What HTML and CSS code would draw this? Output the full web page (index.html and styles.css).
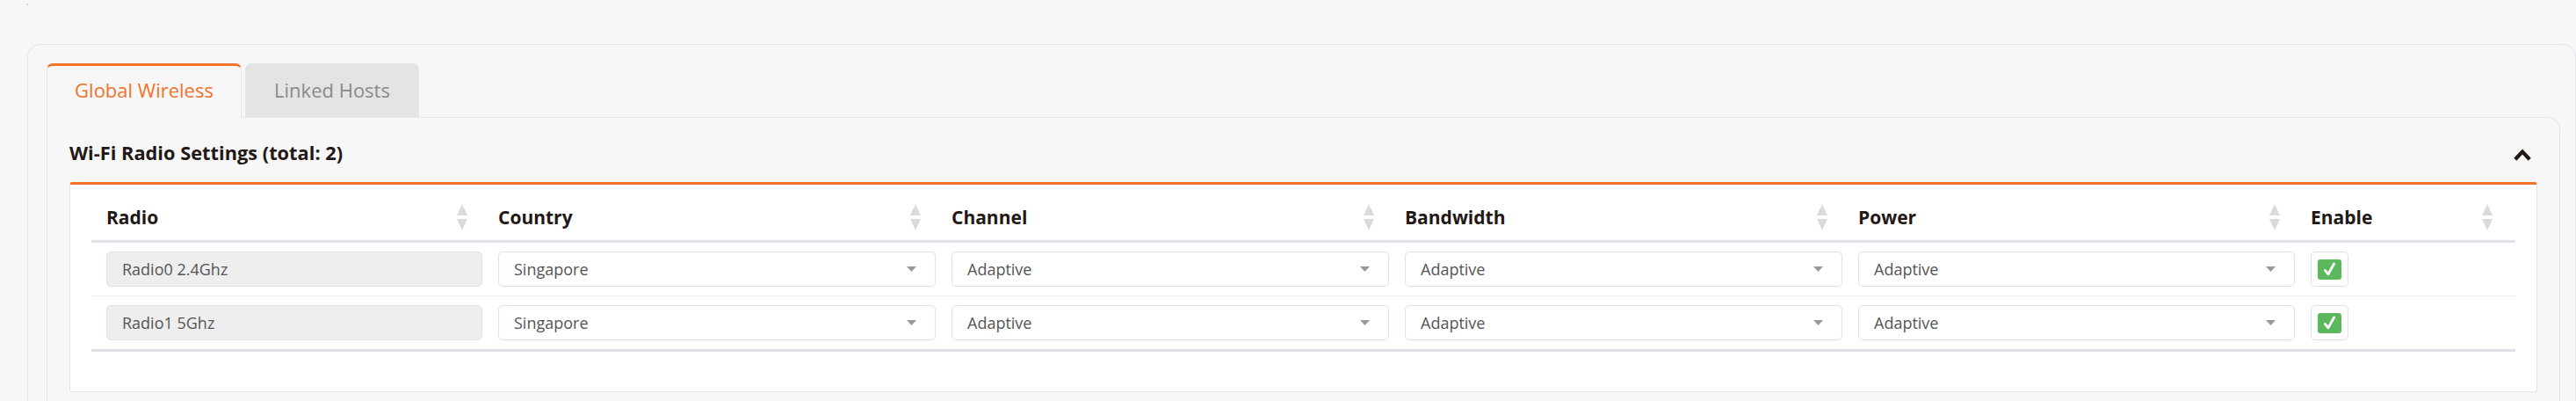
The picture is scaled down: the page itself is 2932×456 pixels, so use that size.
FILE: index.html
```html
<!DOCTYPE html>
<html>
<head>
<meta charset="utf-8">
<link rel="stylesheet" href="styles.css">
</head>
<body>
<div class="dot"></div>
<div class="outer">
  <div class="tabs">
    <div class="tab active">Global Wireless</div>
    <div class="tab">Linked Hosts</div>
  </div>
  <div class="panel">
    <div class="panel-head">
      <h3 class="title">Wi-Fi Radio Settings (total: 2)</h3>
      <svg class="chev" width="20" height="15" viewBox="0 0 20 15"><path d="M1.8 13.2 L10 4.6 L18.2 13.2" fill="none" stroke="#231815" stroke-width="4.2"/></svg>
    </div>
    <div class="card">
      <div class="row head">
        <div class="cell"><span>Radio</span><svg class="sort" width="12" height="30" viewBox="0 0 12 30"><path d="M6 0 L12 13 L0 13Z M0 17 L12 17 L6 30Z" fill="#dadada"/></svg></div>
        <div class="cell"><span>Country</span><svg class="sort" width="12" height="30" viewBox="0 0 12 30"><path d="M6 0 L12 13 L0 13Z M0 17 L12 17 L6 30Z" fill="#dadada"/></svg></div>
        <div class="cell"><span>Channel</span><svg class="sort" width="12" height="30" viewBox="0 0 12 30"><path d="M6 0 L12 13 L0 13Z M0 17 L12 17 L6 30Z" fill="#dadada"/></svg></div>
        <div class="cell"><span>Bandwidth</span><svg class="sort" width="12" height="30" viewBox="0 0 12 30"><path d="M6 0 L12 13 L0 13Z M0 17 L12 17 L6 30Z" fill="#dadada"/></svg></div>
        <div class="cell"><span>Power</span><svg class="sort" width="12" height="30" viewBox="0 0 12 30"><path d="M6 0 L12 13 L0 13Z M0 17 L12 17 L6 30Z" fill="#dadada"/></svg></div>
        <div class="cell"><span>Enable</span><svg class="sort" width="12" height="30" viewBox="0 0 12 30"><path d="M6 0 L12 13 L0 13Z M0 17 L12 17 L6 30Z" fill="#dadada"/></svg></div>
      </div>
      <div class="row body">
        <div class="cell"><div class="field disabled">Radio0 2.4Ghz</div></div>
        <div class="cell"><div class="field select"><span>Singapore</span><svg class="caret" width="11" height="6" viewBox="0 0 11 6"><path d="M0 0 L11 0 L5.5 6Z" fill="#999"/></svg></div></div>
        <div class="cell"><div class="field select"><span>Adaptive</span><svg class="caret" width="11" height="6" viewBox="0 0 11 6"><path d="M0 0 L11 0 L5.5 6Z" fill="#999"/></svg></div></div>
        <div class="cell"><div class="field select"><span>Adaptive</span><svg class="caret" width="11" height="6" viewBox="0 0 11 6"><path d="M0 0 L11 0 L5.5 6Z" fill="#999"/></svg></div></div>
        <div class="cell"><div class="field select"><span>Adaptive</span><svg class="caret" width="11" height="6" viewBox="0 0 11 6"><path d="M0 0 L11 0 L5.5 6Z" fill="#999"/></svg></div></div>
        <div class="cell"><div class="check"><span class="box"><svg width="15" height="16" viewBox="0 0 15 16"><path d="M2.4 9.4 L6 13.8 L12.6 2" fill="none" stroke="#fff" stroke-width="2.8" stroke-linecap="round" stroke-linejoin="round"/></svg></span></div></div>
      </div>
      <div class="row body last">
        <div class="cell"><div class="field disabled">Radio1 5Ghz</div></div>
        <div class="cell"><div class="field select"><span>Singapore</span><svg class="caret" width="11" height="6" viewBox="0 0 11 6"><path d="M0 0 L11 0 L5.5 6Z" fill="#999"/></svg></div></div>
        <div class="cell"><div class="field select"><span>Adaptive</span><svg class="caret" width="11" height="6" viewBox="0 0 11 6"><path d="M0 0 L11 0 L5.5 6Z" fill="#999"/></svg></div></div>
        <div class="cell"><div class="field select"><span>Adaptive</span><svg class="caret" width="11" height="6" viewBox="0 0 11 6"><path d="M0 0 L11 0 L5.5 6Z" fill="#999"/></svg></div></div>
        <div class="cell"><div class="field select"><span>Adaptive</span><svg class="caret" width="11" height="6" viewBox="0 0 11 6"><path d="M0 0 L11 0 L5.5 6Z" fill="#999"/></svg></div></div>
        <div class="cell"><div class="check"><span class="box"><svg width="15" height="16" viewBox="0 0 15 16"><path d="M2.4 9.4 L6 13.8 L12.6 2" fill="none" stroke="#fff" stroke-width="2.8" stroke-linecap="round" stroke-linejoin="round"/></svg></span></div></div>
      </div>
    </div>
  </div>
</div>
</body>
</html>
```
FILE: styles.css
```css
* { box-sizing: border-box; }
html, body { margin: 0; padding: 0; }
body {
  width: 2932px;
  height: 456px;
  overflow: hidden;
  background: #f7f7f7;
  font-family: "Open Sans", "Noto Sans", "Liberation Sans", sans-serif;
  color: #231815;
}
.dot {
  width: 2px;
  height: 2px;
  margin: 4px 0 0 30px;
  background: #d4d4d4;
}
.outer {
  margin: 44px 0 0 31px;
  border: 1px solid #dfe6ee;
  border-bottom: none;
  border-radius: 15px 15px 0 0;
  padding: 21px 17px 0 21px;
  height: 406px;
  display: flex;
  flex-direction: column;
}
.tabs {
  display: flex;
  gap: 4px;
  align-items: flex-end;
}
.tab {
  height: 62px;
  margin-bottom: -1px;
  width: 198px;
  padding-top: 14px;
  text-align: center;
  font-size: 22px;
  line-height: 30px;
  color: #8a8a8a;
  background: #e4e4e4;
  border: 1px solid #dfe6ee;
  border-bottom: none;
  border-radius: 7px 7px 0 0;
  position: relative;
  z-index: 1;
}
.tab.active {
  width: 222px;
  color: #f07329;
  background: #f7f7f7;
  border-top: 3px solid #f07329;
  padding-top: 12px;
}
.panel {
  flex: 1;
  border: 1px solid #dfe6ee;
  border-bottom: none;
  border-radius: 0 14px 0 0;
  background: #f7f7f7;
  padding: 0 25px;
  overflow: hidden;
}
.panel-head {
  display: flex;
  justify-content: space-between;
  align-items: flex-start;
  height: 73px;
  padding-top: 25px;
}
.title {
  margin: 0;
  font-size: 21.8px;
  line-height: 30px;
  font-weight: 700;
}
.chev {
  margin: 9px 7px 0 0;
  display: block;
}
.card {
  background: #fff;
  border: 1px solid #dfe5ec;
  border-top: 3px solid #f07329;
  border-radius: 3px;
  padding: 0 24px 45px;
}
.row {
  display: grid;
  grid-template-columns: 454px 516px 516px 516px 515px 1fr;
}
.row.head {
  border-bottom: 3px solid #dee2e6;
}
.row.head .cell {
  display: flex;
  align-items: center;
  justify-content: space-between;
  padding: 22px 26px 11px 9px;
  font-size: 21px;
  line-height: 28px;
  font-weight: 700;
}
.row.head .cell:first-child { padding-left: 17px; }
.sort { display: block; }
.row.body {
  border-bottom: 1px solid #eceeef;
}
.row.body.last {
  border-bottom: 3px solid #dee2e6;
}
.row.body .cell {
  padding: 10px 9px 10px 9px;
}
.row.body .cell:first-child { padding-left: 17px; }
.field {
  height: 40px;
  border: 1px solid #dbe3ec;
  border-radius: 5px;
  padding: 0 21px 0 17px;
  display: flex;
  align-items: center;
  justify-content: space-between;
  font-size: 18px;
  color: #555;
  background: #fff;
}
.field.disabled { background: #eeeeee; }
.caret { display: block; }
.check {
  width: 43px;
  height: 40px;
  border: 1px solid #dbe3ec;
  border-radius: 5px;
  background: #fff;
  display: flex;
  align-items: center;
  justify-content: center;
}
.box {
  width: 27px;
  height: 23px;
  border-radius: 3px;
  background: #5cb85c;
  display: flex;
  align-items: center;
  justify-content: center;
}
.box svg { display: block; }
```
